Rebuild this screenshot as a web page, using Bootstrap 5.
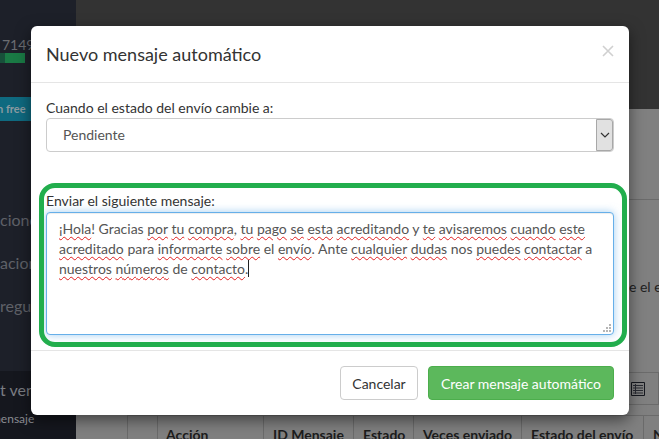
<!DOCTYPE html>
<html lang="es">
<head>
<meta charset="utf-8">
<title>Nuevo mensaje automático</title>
<link href="https://cdn.jsdelivr.net/npm/bootstrap@5.3.0/dist/css/bootstrap.min.css" rel="stylesheet">
<style>
html,body{height:100%;margin:0;overflow:hidden}
body{font-family:"Lato","Liberation Sans",sans-serif;font-size:14px;color:#333;background:#808080}
.stage{width:659px;height:439px;overflow:hidden;position:relative}
.side-col{width:76px;background:#1d2029;color:#5d5f66;flex:none;overflow:hidden}
.side-num{margin-top:35px;height:18px;padding-left:2px;font-size:14px;line-height:20px;color:#6b6d72;white-space:nowrap}
.side-bar{height:10px;width:25px;background:#1a7a45;display:flex}
.side-bar i{display:block;width:5px;background:#17503a}
.side-free{margin-top:34px;height:24px;background:#0f6a80;color:#8c9ba2;font-weight:700;font-size:11px;line-height:24px;white-space:nowrap;margin-left:-3px}
.side-item{white-space:nowrap;font-size:16px;line-height:22px;height:22px;color:#5f6168}
.item-a{margin-top:88px}
.item-b{margin-top:21px}
.side-low{margin-top:54px;flex:1;background:#15171e;padding-top:8px}
.low-a{font-size:16px;line-height:22px;color:#7b7d83;white-space:nowrap}
.low-b{font-size:12px;line-height:16px;margin-top:10px;margin-left:-9px;color:#8a8c92;white-space:nowrap}
.main-col{flex:1;min-width:0;overflow:hidden}
.top-band{height:109px;background:#333}
.under-head{height:91px;border-bottom:1px solid #6b6b6b}
.frag{margin-top:77px;height:20px;line-height:20px;padding-left:553px;white-space:nowrap;color:#222}
.tool-row{margin-top:75px;height:33px;margin-right:0;border-top:1px solid #6b6b6b;border-bottom:1px solid #6b6b6b;border-right:1px solid #6b6b6b;display:flex;justify-content:flex-end;align-items:center;padding-right:13px}
.head-row{margin-top:10px;height:40px;border-top:1px solid #6b6b6b;display:flex;font-weight:700;color:#1c1c1c;line-height:20px;white-space:nowrap;margin-left:51px}
.head-cell{padding:9px 0 0 9px;border-left:1px solid #6b6b6b;flex:none}
.cell-a{width:30px}.cell-b{width:106px;padding-left:8px}.cell-c{width:90px}.cell-d{width:60px}.cell-e{width:108px}.cell-f{width:122px}.cell-g{width:30px}
.dialog{position:absolute;left:31px;top:26px;width:598px;height:389px;border:0;border-radius:6px;box-shadow:0 5px 15px rgba(0,0,0,.5);background:#fff}
.dialog .modal-header{height:57px;padding:15px;border-bottom:1px solid #e5e5e5}
.dialog .modal-title{font-size:18px;line-height:25px;color:#333;font-weight:400}
.x-btn{position:absolute;right:15px;top:19px;width:12px;height:12px;padding:0;border:0;background:none;display:flex}
.dialog .modal-body{padding:15px;flex:none;height:267px;display:flex;flex-direction:column}
.lbl{line-height:20px;color:#333;margin:0;height:20px}
.lbl-tall{height:21px}
.sel-box{height:34px;border:1px solid #ccc;border-radius:4px;display:flex;background:#fff}
.sel-text{flex:1;padding:5px 16px;line-height:22px;color:#555}
.sel-btn{width:17px;background:#e1e1e1;border:1px solid #a8a8a8;border-radius:0 3px 3px 0;display:flex;align-items:center;justify-content:center}
.gap-block{height:39px}
.msg-box{position:relative;height:123px;border:1px solid #66afe9;border-radius:4px;box-shadow:inset 0 1px 1px rgba(0,0,0,.075),0 0 8px rgba(102,175,233,.6);padding:6px 12px;line-height:20px;color:#555;background:#fff}
.msg-box u{text-decoration:underline wavy #e02020 1px;text-underline-offset:2px}
.caret-mark{display:inline-block;width:1px;height:17px;background:#222;vertical-align:-3px}
.grip{position:absolute;right:2px;bottom:2px;display:block}
.hilite{position:absolute;left:39px;top:183px;width:588px;height:164px;border:5px solid #22ae4d;border-radius:16px;pointer-events:none}
.dialog .modal-footer{height:65px;padding:15px;border-top:1px solid #e5e5e5;display:flex;justify-content:flex-end;gap:10px;flex-wrap:nowrap}
.dialog .modal-footer>.btn{margin:0}
.btn-cancel{height:34px;width:78px;font-size:14px;padding:0;color:#333;background:#fff;border:1px solid #ccc;border-radius:4px}
.btn-make{height:34px;width:186px;font-size:14px;padding:0;color:#fff;background:#5cb85c;border:1px solid #4cae4c;border-radius:4px}
</style>
</head>
<body>
<div class="stage d-flex">
  <div class="side-col d-flex flex-column">
    <div class="side-num">7149</div>
    <div class="side-bar"><i></i></div>
    <div class="side-free">n free</div>
    <div class="side-item item-a">cione</div>
    <div class="side-item item-b">acione</div>
    <div class="side-item item-b">regun</div>
    <div class="side-low">
      <div class="low-a">t ven</div>
      <div class="low-b">mensaje</div>
    </div>
  </div>
  <div class="main-col">
    <div class="top-band"></div>
    <div class="under-head"></div>
    <div class="frag">e el e</div>
    <div class="tool-row">
      <svg width="14" height="14" viewBox="0 0 14 14"><path fill="none" stroke="#16181f" stroke-width="1" d="M.5.5h13v13H.5z"/><path fill="none" stroke="#2a2c33" stroke-width="1" d="M2 3.5h10M2 6h10M2 8.5h10M2 11h10M4.5 2v10"/></svg>
    </div>
    <div class="head-row">
      <div class="head-cell cell-a"></div>
      <div class="head-cell cell-b">Acción</div>
      <div class="head-cell cell-c">ID Mensaje</div>
      <div class="head-cell cell-d">Estado</div>
      <div class="head-cell cell-e">Veces enviado</div>
      <div class="head-cell cell-f">Estado del envío</div>
      <div class="head-cell cell-g">N</div>
    </div>
  </div>
  <div class="modal-content dialog">
    <div class="modal-header">
      <h4 class="modal-title">Nuevo mensaje automático</h4>
      <button class="x-btn" type="button" aria-label="Cerrar"><svg width="12" height="12" viewBox="0 0 12 12"><path d="M1 1l10 10M11 1L1 11" stroke="#d0d0d0" stroke-width="1.6"/></svg></button>
    </div>
    <div class="modal-body">
      <p class="lbl">Cuando el estado del envío cambie a:</p>
      <div class="sel-box">
        <div class="sel-text">Pendiente</div>
        <div class="sel-btn"><svg width="10" height="6" viewBox="0 0 10 6"><path d="M1 1l4 4 4-4" fill="none" stroke="#333" stroke-width="1.2"/></svg></div>
      </div>
      <div class="gap-block"></div>
      <p class="lbl lbl-tall">Enviar el siguiente mensaje:</p>
      <div class="msg-box"><u>¡Hola</u>! Gracias <u>por</u> <u>tu</u> <u>compra</u>, <u>tu</u> <u>pago</u> <u>se</u> <u>esta</u> <u>acreditando</u> y <u>te</u> <u>avisaremos</u> <u>cuando</u> <u>este</u> <u>acreditado</u> para <u>informarte</u> <u>sobre</u> el <u>envío</u>. Ante <u>cualquier</u> <u>dudas</u> nos <u>puedes</u> <u>contactar</u> a <u>nuestros</u> <u>números</u> de <u>contacto</u>.<span class="caret-mark"></span>
        <svg class="grip" width="9" height="9" viewBox="0 0 9 9"><path fill="#b5b5b5" d="M7 1h2v2H7zM4 4h2v2H4zM7 4h2v2H7zM1 7h2v2H1zM4 7h2v2H4zM7 7h2v2H7z"/></svg>
      </div>
    </div>
    <div class="modal-footer">
      <button type="button" class="btn btn-cancel">Cancelar</button>
      <button type="button" class="btn btn-make">Crear mensaje automático</button>
    </div>
  </div>
  <div class="hilite"></div>
</div>
</body>
</html>
